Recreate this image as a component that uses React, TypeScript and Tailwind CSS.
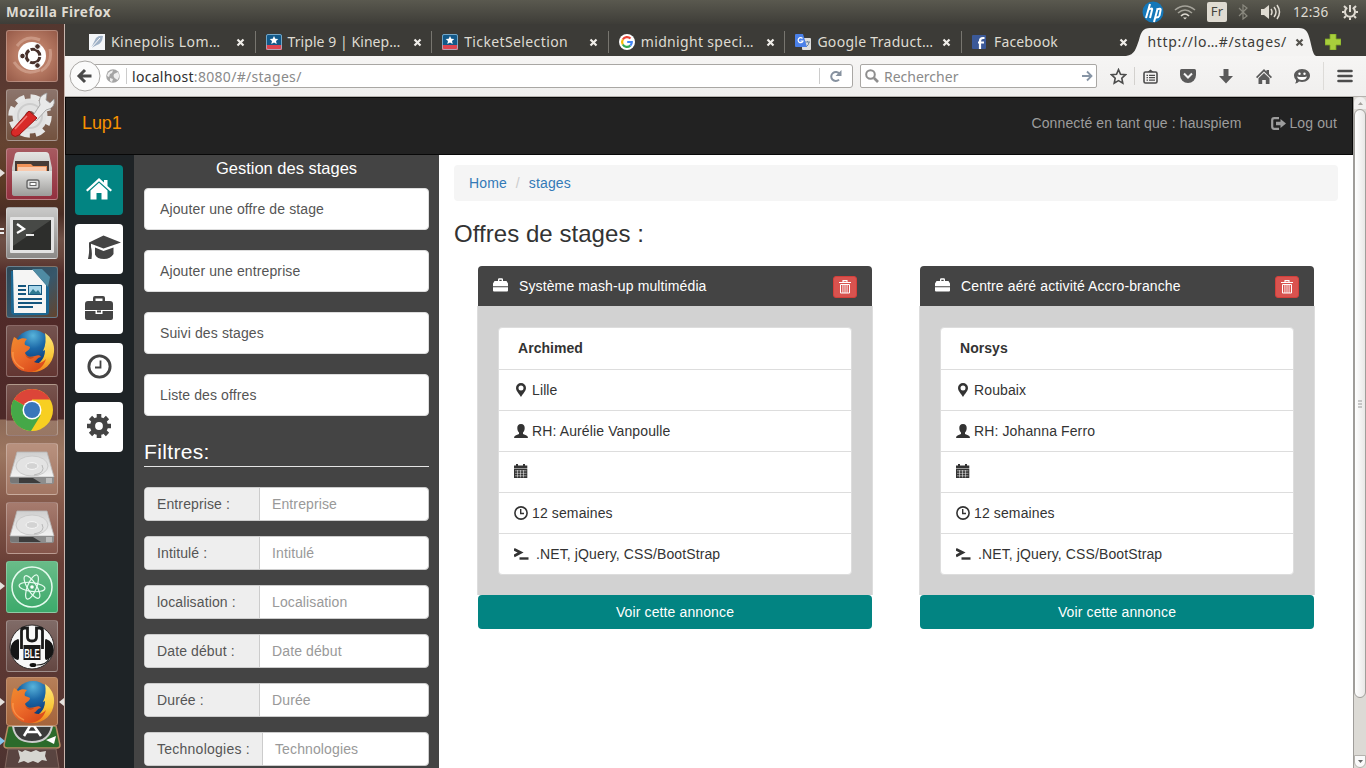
import React from "react";

type Kids = { children?: React.ReactNode };

const ui = "font-['Noto_Sans',sans-serif]";

function Svg({ w, h, vb, className = "", children }: { w: number; h: number; vb?: string; className?: string } & Kids) {
  return (
    <svg width={w} height={h} viewBox={vb ?? `0 0 ${w} ${h}`} className={`block shrink-0 ${className}`}>
      {children}
    </svg>
  );
}

/* ---------- launcher ---------- */

function Defs() {
  return (
    <svg width="0" height="0" className="absolute">
      <defs>
        <radialGradient id="globe" cx="0.5" cy="0.15" r="0.85">
          <stop offset="0" stopColor="#58b3da" />
          <stop offset="0.4" stopColor="#1c69a8" />
          <stop offset="1" stopColor="#0b2c66" />
        </radialGradient>
        <linearGradient id="fox" x1="0" y1="0" x2="0.7" y2="1">
          <stop offset="0" stopColor="#f08a2d" />
          <stop offset="0.55" stopColor="#ec6a2a" />
          <stop offset="1" stopColor="#d94a1a" />
        </linearGradient>
        <linearGradient id="tail" x1="0" y1="0" x2="0" y2="1">
          <stop offset="0" stopColor="#ffe97a" />
          <stop offset="0.6" stopColor="#f9c739" />
          <stop offset="1" stopColor="#ee7c1d" />
        </linearGradient>
        <linearGradient id="metal" x1="0" y1="0" x2="0" y2="1">
          <stop offset="0" stopColor="#e4e4e2" />
          <stop offset="1" stopColor="#9c9b99" />
        </linearGradient>
        <linearGradient id="disk" x1="0" y1="0" x2="0" y2="1">
          <stop offset="0" stopColor="#cfcfcf" />
          <stop offset="1" stopColor="#f3f3f3" />
        </linearGradient>
      </defs>
    </svg>
  );
}

function Tile({ bg, children }: { bg: string } & Kids) {
  return (
    <div className={`flex h-[52px] w-[52px] shrink-0 items-center justify-center rounded-[3px] border border-white/25 ${bg}`}>
      {children}
    </div>
  );
}

const Firefox = () => (
  <Svg w={46} h={46}>
    <circle cx="24" cy="21" r="19" fill="url(#globe)" />
    <path d="M36 5c6 4 10 11 9 19-1 12-10 20-21 20-8 0-14-4-17-9 6 4 17 5 23 0 5-4 6-9 6-13l-2 1c3-6 3-12 2-18z" fill="url(#tail)" />
    <path d="M5 9c2 1 3 2 4 3 3-2 6-2 9-1-2 2-3 4-2 6 2 1 4 1 5 2 0 3-4 4-5 6 2 5 7 4 10 3 3-1 5-1 6 1-3 0-4 3-7 5 5 2 8 1 12-3-2 7-8 13-17 13C9 44 2 35 2 25c0-6 1-11 3-16z" fill="url(#fox)" />
    <path d="M16 25c1 4 5 5 9 4-3 3-8 2-9-4z" fill="#8f2b12" opacity="0.5" />
    <path d="M4 24c-1 8 4 14 11 17" fill="none" stroke="#ffa051" strokeWidth="1.5" opacity="0.7" />
  </Svg>
);

const Drive = () => (
  <Svg w={48} h={38}>
    <path d="M9 2h30l7 25H2z" fill="url(#disk)" stroke="#b5b5b5" strokeWidth="0.8" />
    <ellipse cx="24" cy="16" rx="16" ry="10" fill="#e3e3e3" stroke="#cacaca" />
    <ellipse cx="24" cy="16" rx="6" ry="3.4" fill="#d3d3d3" stroke="#f6f6f6" />
    <path d="M34 15q4 8-8 10" fill="none" stroke="#b8b8b8" />
    <path d="M2 27h44v5q0 2-2 2H4q-2 0-2-2z" fill="#8d8d8d" />
    <path d="M2 28h9v5H4q-2 0-2-2z" fill="#777" />
    <path d="M11 28h14l8 5H11z" fill="#3c3c3c" />
    <path d="M38 28h6v5h-6z" fill="#b9b9b9" />
  </Svg>
);

function Launcher() {
  return (
    <div className="relative flex w-[65px] shrink-0 flex-col items-start gap-[7px] overflow-hidden border-r border-[#c9b6ae] bg-[linear-gradient(180deg,#54372f_0px,#5a3931_60px,#654331_120px,#5b3a25_160px,#4a2d24_190px,#6e5046_215px,#67463c_232px,#522b29_250px,#4d2928_395px,#8d6a57_396px,#9c7660_430px,#85594a_480px,#693f37_540px,#5c3833_640px,#4d3330_744px)] pt-[6px] pl-[6px]">
      <Tile bg="bg-[radial-gradient(circle,#cc9c86_0%,#b97c65_45%,#965a48_100%)]">
        <Svg w={46} h={46}>
          <path d="M8 13Q17 1 31 7M5 29Q15 44 31 37M41 16Q44 31 32 38" fill="none" stroke="#d8ae9b" strokeWidth="3" opacity="0.6" />
          <circle cx="23" cy="23" r="14" fill="#fff" />
          <circle cx="24" cy="23" r="6.8" fill="none" stroke="#47302a" strokeWidth="3.1" strokeDasharray="12.6 1.6" strokeDashoffset="-1" />
          <circle cx="13.5" cy="23" r="2.8" fill="#47302a" stroke="#fff" />
          <circle cx="28.5" cy="13.5" r="2.8" fill="#47302a" stroke="#fff" />
          <circle cx="28.5" cy="32.5" r="2.8" fill="#47302a" stroke="#fff" />
        </Svg>
      </Tile>
      <Tile bg="bg-[linear-gradient(180deg,#8c746c,#73523f)]">
        <Svg w={50} h={48}>
          <circle cx="23" cy="25" r="17.5" fill="#e2e2e2" />
          <circle cx="23" cy="25" r="19" fill="none" stroke="#e6e6e6" strokeWidth="5.5" strokeDasharray="9 5.92" />
          <circle cx="23" cy="25" r="12" fill="none" stroke="#cdcdcd" strokeWidth="2" />
          <circle cx="23" cy="25" r="5" fill="#7d635b" />
          <path d="M25 26l8-12q-3-9 7-12l-1 7 4 3 4-4q2 9-8 11L29 30z" fill="#e9e9e9" stroke="#999" strokeWidth="0.8" />
          <path d="M22 20l8 7L12 44q-4 3-7 0-2-3 1-6z" fill="#d92a28" stroke="#9c1514" />
          <path d="M20 25L8 38" stroke="#f07b76" strokeWidth="1.5" />
        </Svg>
      </Tile>
      <Tile bg="bg-[linear-gradient(180deg,#a75a60,#93303f)]">
        <Svg w={44} h={46}>
          <path d="M5 3q1-2 3-2h28q2 0 3 2l3 14v25q0 3-3 3H5q-3 0-3-3V17z" fill="url(#metal)" />
          <path d="M5 10h34v14H5z" fill="#463b36" />
          <path d="M7 13h14l2 2h14v10H7z" fill="#f0935a" />
          <path d="M8 17h28M8 19h28" stroke="#fff" />
          <path d="M2 20h40v22q0 3-3 3H5q-3 0-3-3z" fill="url(#metal)" />
          <rect x="17" y="29" width="12" height="8.500" rx="2" fill="#ddd" stroke="#666" strokeWidth="1.4" />
          <rect x="20" y="31.5" width="6" height="3" fill="#fff" stroke="#666" />
        </Svg>
      </Tile>
      <Tile bg="bg-[linear-gradient(180deg,#c9c9c8,#8b8987)]">
        <Svg w={46} h={42}>
          <rect x="1" y="5" width="44" height="36" rx="1" fill="#e3e3e3" />
          <path d="M4 8h38v30H4z" fill="#2d2e2c" />
          <path d="M4 8h38L4 34z" fill="#565855" opacity="0.65" />
          <path d="M8 12l7 5-7 4" fill="none" stroke="#fff" strokeWidth="2.2" />
          <path d="M17 23h8" stroke="#fff" strokeWidth="1.8" />
        </Svg>
      </Tile>
      <Tile bg="bg-[linear-gradient(135deg,#2f4654_0%,#37576b_55%,#63442e_100%)]">
        <Svg w={44} h={48} className="-ml-[4px]">
          <path d="M3 3h22l16 16v25q0 3-3 3H7q-4 0-4-4z" fill="#1c6792" />
          <path d="M5 2h20l13 15v28H6z" fill="#f5f5f4" />
          <path d="M24 1h10l8 8-2 10z" fill="#4f8ba3" />
          <path d="M10 18h8M10 22h8M10 26h8M10 31h24M10 35h24M10 39h15" stroke="#14567e" strokeWidth="2" />
          <rect x="20.500" y="17.500" width="13" height="9" fill="#a9d7ea" stroke="#14567e" />
          <path d="M21 26l4-5 3 3 2-2 3 4z" fill="#2d7890" />
        </Svg>
      </Tile>
      <Tile bg="bg-[linear-gradient(180deg,#74534f,#633632)]"><Firefox /></Tile>
      <Tile bg="bg-[linear-gradient(180deg,#77544e_0px,#673c38_35px,#9a7968_36px,#987763_52px)]">
        <Svg w={44} h={44}>
          <circle cx="22" cy="22" r="21" fill="#f7cf22" />
          <path d="M22 22L3.8 11.5A21 21 0 0 1 40.2 11.5H22z" fill="#dc4538" />
          <path d="M22 22L12.9 16.8 3.8 11.5A21 21 0 0 0 21 43l9.5-15.5z" fill="#45a848" />
          <circle cx="22" cy="22" r="9.500" fill="#fff" />
          <circle cx="22" cy="22" r="8" fill="#3a76ba" />
        </Svg>
      </Tile>
      <Tile bg="bg-[linear-gradient(180deg,#b8917e,#a27663)]"><Drive /></Tile>
      <Tile bg="bg-[linear-gradient(180deg,#a67b6e,#85564b)]"><Drive /></Tile>
      <Tile bg="bg-[linear-gradient(180deg,#69bb88,#3caa6b)]">
        <Svg w={44} h={44}>
          <g fill="none" stroke="#e4fbee" strokeWidth="1.2">
            <circle cx="22" cy="22" r="20" strokeWidth="1.500" />
            <ellipse cx="22" cy="22" rx="4.500" ry="13" transform="rotate(22 22 22)" />
            <ellipse cx="22" cy="22" rx="4.500" ry="13" transform="rotate(97 22 22)" />
            <ellipse cx="22" cy="22" rx="4.500" ry="13" transform="rotate(148 22 22)" />
          </g>
          <circle cx="22" cy="22" r="1.800" fill="#fff" />
        </Svg>
      </Tile>
      <Tile bg="bg-[linear-gradient(180deg,#806b67,#644742)]">
        <Svg w={48} h={48}>
          <circle cx="24" cy="25" r="22" fill="#f8f8f8" stroke="#2f2a29" strokeWidth="1" />
          <path d="M13.500 27V9q0-3 3-3h3v9q0 4 4.500 4t4.500-4V6h3q3 0 3 3v18" fill="none" stroke="#1a1a1a" strokeWidth="2.800" />
          <path d="M10 17Q2 20 2.500 28t7 10q1.500 0 1.500-2V19q0-2-1-2zM38 17q8 3 7.500 11t-7 10q-1.500 0-1.500-2V19q0-2 1-2z" fill="#151515" />
          <path d="M41 37q-3 6-12 6" fill="none" stroke="#222" strokeWidth="1.200" />
          <ellipse cx="25" cy="43" rx="3.500" ry="2" fill="#111" />
          <rect x="15.500" y="23" width="17" height="15" fill="#1a1a1a" />
          <text x="24" y="35.500" textAnchor="middle" fontFamily="Liberation Sans" fontWeight="700" fontSize="13" textLength="15.500" lengthAdjust="spacingAndGlyphs" fill="#fff">BLE</text>
        </Svg>
      </Tile>
      <div className="-mt-[2px] flex h-[91px] w-[52px] shrink-0 flex-col">
        <div className="z-10 flex h-[50px] items-center justify-center rounded-[3px] border border-[#c08f6d] bg-[linear-gradient(180deg,#b77f58,#a5643c)]"><Firefox /></div>
        <Svg w={58} h={42} className="-ml-[3px]">
          <path d="M5 0h48l4 19q0 3-3 3H4q-3 0-3-3z" fill="#2b6b2b" stroke="#b78c63" strokeWidth="1.5" />
          <path d="M10 0q2 16 19 16T49 0z" fill="#3b3b3b" stroke="#ccc" strokeWidth="2" />
          <path d="M21 10l6-10h4l7 10M23 6h12" fill="none" stroke="#fff" strokeWidth="2.500" />
          <path d="M43 14l10-4-2 8z" fill="#fff" />
          <path d="M5 23h48l3 19H2z" fill="#594440" stroke="#80665e" />
          <path d="M15 24l4 2 3-2 6 2 5-2 4 2 6-1-1 5 2 5-5-1-4 3-5-2-5 2-4-2-6 2 2-5z" fill="#d6d5d0" />
        </Svg>
      </div>
      <div className="absolute top-[145px] left-0"><Svg w={5} h={8}><path d="M0 0l5 4-5 4z" fill="#e5e1dd" /></Svg></div>
      <div className="absolute top-[204px] left-0"><Svg w={4} h={8}><path d="M0 1h4M0 5h4" stroke="#eee" strokeWidth="2" /></Svg></div>
      <div className="absolute top-[558px] left-0"><Svg w={5} h={8}><path d="M0 0l5 4-5 4z" fill="#e5e1dd" /></Svg></div>
      <div className="absolute top-[674px] left-0"><Svg w={5} h={8}><path d="M0 0l5 4-5 4z" fill="#e5e1dd" /></Svg></div>
      <div className="absolute top-[713px] left-0"><Svg w={5} h={8}><path d="M0 0l5 4-5 4z" fill="#87c5ed" /></Svg></div>
      <div className="absolute top-[674px] right-0"><Svg w={5} h={8}><path d="M5 0L0 4l5 4z" fill="#e5e1dd" /></Svg></div>
    </div>
  );
}

/* ---------- desktop panel ---------- */

function TopPanel() {
  return (
    <div className={`flex h-6 shrink-0 items-center bg-[linear-gradient(180deg,#5a594f,#3e3d38)] pl-[6px] text-[13.5px] text-[#dfdbd2] ${ui}`}>
      <span className="font-bold tracking-[0.480px]">Mozilla Firefox</span>
      <Svg w={22} h={22} className="ml-auto">
        <circle cx="11" cy="11" r="10.500" fill="#1477b9" />
        <path d="M8 3L4 17M6 9q5-3 4 0l-2 8M15.500 8l-3.500 13M14.500 8.500q5-2 4 1l-1 5q-1 2.500-4 2" fill="none" stroke="#fff" strokeWidth="2" />
      </Svg>
      <Svg w={22} h={16} className="ml-[10px]">
        <g fill="none" stroke="#a5a39a" strokeWidth="1.6">
          <path d="M1 6Q11-2 21 6" /><path d="M4 9q7-6 14 0" /><path d="M7 12q4-4 8 0" stroke="#dfdbd2" />
        </g>
        <path d="M9 13.500h4l-2 2z" fill="#dfdbd2" />
      </Svg>
      <span className="ml-[11px] flex h-5 w-5 items-center justify-center rounded-[2px] bg-[#dfdbd2] text-[13px] tracking-[0.300px] text-[#44433e]">Fr</span>
      <Svg w={10} h={16} className="ml-[11px]"><path d="M1 4l8 8-4 3V1l4 3-8 8" fill="none" stroke="#8a897f" strokeWidth="1.2" /></Svg>
      <Svg w={22} h={16} className="ml-[12px]">
        <path d="M1 5h3l5-4v14l-5-4H1z" fill="#dfdbd2" />
        <path d="M11 5q2 3 0 6M14 3q4 5 0 10M17 1q5 7 0 14" fill="none" stroke="#dfdbd2" strokeWidth="1.5" />
      </Svg>
      <span className="ml-[11px] w-[38px] tracking-[0.150px]">12:36</span>
      <Svg w={16} h={18} className="mr-[8px] ml-[11px]">
        <g fill="none" stroke="#dfdbd2">
          <path d="M5.200 4.700A5 5 0 1 0 10.800 4.700" strokeWidth="2" />
          <path d="M8 2v7" strokeWidth="2" />
          <path d="M0 9h2.500M13.500 9H16M2 15l2-2M14 15l-2-2M2 3l2 2M14 3l-2 2M8 14.500V17" strokeWidth="2" />
        </g>
      </Svg>
    </div>
  );
}

/* ---------- browser chrome ---------- */

const Close = ({ dark = false }: { dark?: boolean }) => (
  <Svg w={9} h={9}><path d="M1.500 1.500l6 6M7.500 1.500l-6 6" stroke={dark ? "#55534e" : "#f0eee9"} strokeWidth="2.2" /></Svg>
);

const Kine = () => (
  <Svg w={16} h={16}>
    <rect width="16" height="16" rx="1.500" fill="#12598a" />
    <rect y="11" width="16" height="5" fill="#dd4450" />
    <path d="M8 2l1.300 2.800 3 .3-2.300 2 .7 3L8 8.600l-2.700 1.500.7-3-2.300-2 3-.3z" fill="#fff" />
    <rect x="0.500" y="0.500" width="15" height="15" rx="1.500" fill="none" stroke="#9fc7de" opacity="0.7" />
  </Svg>
);

const tabs: { icon: React.ReactNode; label: string; cls: string }[] = [
  { icon: <Svg w={16} h={16}><rect width="16" height="16" fill="#f4f6f8" /><path d="M2 14L7 4q3-3 7-2-1 8-6 9z" fill="#9fb1c6" /><path d="M2 14l9-10" stroke="#fff" /></Svg>, label: "Kinepolis Lom…", cls: "tracking-[0.430px]" },
  { icon: <Kine />, label: "Triple 9 | Kinep…", cls: "tracking-[0.060px]" },
  { icon: <Kine />, label: "TicketSelection", cls: "tracking-[0.380px]" },
  {
    icon: (
      <Svg w={16} h={16}>
        <circle cx="8" cy="8" r="8" fill="#fff" />
        <g fill="none" strokeWidth="2.200">
          <path d="M11.500 4.500A4.900 4.900 0 0 0 3.800 5.500" stroke="#ea4335" />
          <path d="M3.800 5.500a4.900 4.900 0 0 0 0 5" stroke="#fbbc05" />
          <path d="M3.800 10.500a4.900 4.900 0 0 0 7.500 1.100" stroke="#34a853" />
          <path d="M11.300 11.600Q12.900 10 12.800 8H8.200" stroke="#4285f4" />
        </g>
      </Svg>
    ), label: "midnight speci…", cls: "tracking-[0.330px]",
  },
  {
    icon: (
      <Svg w={16} h={16}>
        <rect x="7" y="4" width="9" height="12" rx="1" fill="#dcdcdc" /><path d="M10 8h5M12.500 7v1M11 13q3-2 3-5" stroke="#68839b" fill="none" />
        <path d="M1 0h7l4 13H1q-1 0-1-1V1q0-1 1-1z" fill="#4a80e8" />
        <path d="M7.500 4.500A2.500 2.500 0 1 0 8 7H5.500" fill="none" stroke="#fff" strokeWidth="1.200" />
      </Svg>
    ), label: "Google Traduct…", cls: "tracking-[0.300px]",
  },
  { icon: <Svg w={14} h={14}><rect width="14" height="14" rx="1" fill="#3b5998" /><path d="M8 14V6q0-3 3-3h1.500M6 7.500h6" fill="none" stroke="#fff" strokeWidth="2.200" /></Svg>, label: "Facebook", cls: "tracking-[0.150px]" },
];

function TabBar() {
  return (
    <div className={`flex h-8 shrink-0 bg-[#3c3b37] pl-[14px] text-[14px] text-[#dfdbd2] ${ui}`}>
      {tabs.map((t, i) => (
        <div key={i} className={`flex w-[176.600px] shrink-0 items-center pt-[4px] pl-[10px] ${i === 5 ? "mr-[-2px]" : ""}`}>
          <span className="w-[22px] shrink-0">{t.icon}</span>
          <span className={`w-[125px] shrink-0 pb-[2px] whitespace-nowrap ${t.cls}`}>{t.label}</span>
          <Close />
          {i < 5 && <span className="ml-auto h-[22px] w-px bg-[#77756f]" />}
        </div>
      ))}
      <div className="relative -ml-[4px] h-8 w-[190px] shrink-0">
        <Svg w={190} h={32} className="-ml-[7px]">
          <path d="M0 32C9 31 10 24 13 16 15 8 17 4 24 4H173c7 0 9 4 11 12 2 8 3 15 6 16z" fill="#f4f3f2" />
        </Svg>
        <div className="absolute inset-0 flex items-center pt-[4px] pl-[15px] text-[#3c3b37]">
          <span className="w-[147px] pb-[2px] tracking-[0.650px] whitespace-nowrap">http://lo…#/stages/</span>
          <Close dark />
        </div>
      </div>
      <Svg w={16} h={16} className="mt-[10px] ml-[2px]">
        <path d="M5 0h6v5h5v6h-5v5H5v-5H0V5h5z" fill="#a8cf3c" stroke="#7ba324" strokeWidth="0.800" />
      </Svg>
    </div>
  );
}

function NavBar() {
  return (
    <div className={`flex h-[41px] shrink-0 items-center border-b border-[#b5b2ae] bg-[linear-gradient(180deg,#f6f5f4,#f0efee)] pl-[4px] text-[14px] ${ui}`}>
      <Svg w={32} h={32} className="z-10">
        <circle cx="16" cy="16" r="15" fill="#fbfbfb" stroke="#a9a7a4" />
        <path d="M16 10L10 16l6 6M10.500 16h12" fill="none" stroke="#4a4a4a" strokeWidth="3" />
      </Svg>
      <div className="-ml-[8px] flex h-6 w-[760px] items-center rounded-[3px] border border-[#a9a7a4] bg-white pl-[12px]">
        <Svg w={14} h={14}>
          <circle cx="7" cy="7" r="6.800" fill="#a5a5a5" />
          <path d="M2 4q3-3 5-2.500L6 4l-2 1-1 3-2-1zM8 5l4-2 1.500 4-2 4-3-2-1-2zM4 9l3 1-1 3-2-1z" fill="#efefef" />
        </Svg>
        <span className="mr-[5px] ml-[6px] h-4 w-px bg-[#ccc]" />
        <span className="tracking-[0.300px] text-[#2e2e2e]">localhost<span className="text-[#8a8a8a]">:8080/#/stages/</span></span>
        <span className="ml-auto h-4 w-px bg-[#ccc]" />
        <Svg w={12} h={12} className="mx-[10px]">
          <path d="M9 9.600A4.500 4.500 0 1 1 9.500 4" fill="none" stroke="#86919f" strokeWidth="2" /><path d="M11.500 0v6h-6z" fill="#86919f" />
        </Svg>
      </div>
      <div className="ml-[7px] flex h-6 w-[237px] items-center rounded-[2px] border border-[#a9a7a4] bg-white pl-[4px]">
        <Svg w={14} h={14}><circle cx="5.500" cy="5.500" r="4.300" fill="none" stroke="#8e8e8e" strokeWidth="2" /><path d="M9 9l4 4" stroke="#8e8e8e" strokeWidth="2.600" /></Svg>
        <span className="ml-[5px] text-[#8a8a8a]">Rechercher</span>
        <Svg w={11} h={12} className="mr-[3px] ml-auto"><path d="M0 6h9M5 1.500L9.500 6 5 10.500" fill="none" stroke="#8795a5" strokeWidth="1.800" /></Svg>
      </div>
      <Svg w={17} h={17} className="ml-[13px]"><path d="M8.500 1.600l2 4.600 5 .5-3.700 3.500 1 5-4.300-2.600-4.300 2.600 1-5L1.500 6.700l5-.5z" fill="none" stroke="#4c4c4c" strokeWidth="1.600" /></Svg>
      <span className="ml-[7px] h-[18px] w-px bg-[#d3d1ce]" />
      <Svg w={15} h={15} className="ml-[8px]">
        <rect x="1" y="3" width="13" height="11" rx="1.500" fill="none" stroke="#4c4c4c" strokeWidth="1.600" />
        <path d="M4.500 3L7.500.5l3 2.500z" fill="#4c4c4c" /><path d="M3.500 6.300h1.500M6 6.300h6M3.500 8.700h1.500M6 8.700h6M3.500 11.200h1.500M6 11.200h6" stroke="#4c4c4c" strokeWidth="1.300" />
      </Svg>
      <Svg w={16} h={14} className="ml-[22px]"><path d="M1.500 0h13Q16 0 16 1.500V6a8 8 0 0 1-16 0V1.500Q0 0 1.500 0z" fill="#5a5a5a" /><path d="M4 4.500L8 8.500l4-4" fill="none" stroke="#f4f4f4" strokeWidth="2" /></Svg>
      <Svg w={14} h={15} className="ml-[23px]"><path d="M4.500 0h5v7H14L7 14.500 0 7h4.500z" fill="#5a5a5a" /></Svg>
      <Svg w={16} h={15} className="ml-[23px]"><path d="M8 0l2.500 2.500V1H13v4l3 3-1.200 1.200L8 2.600 1.200 9.200 0 8z" fill="#5a5a5a" /><path d="M8 4l5.500 5.300V15H9.800v-4H6.200v4H2.500V9.300z" fill="#5a5a5a" /></Svg>
      <Svg w={16} h={15} className="ml-[22px]">
        <path d="M8 0c5 0 8 3 8 6.500S13 13 8 13c-1 0-2 0-3-.4Q3.500 14.500 1 14.500q1.500-2 1-3.500Q0 9.500 0 6.500C0 3 3.500 0 8 0z" fill="#5a5a5a" />
        <circle cx="5.500" cy="4.800" r="1.200" fill="#fff" /><circle cx="10.500" cy="4.800" r="1.200" fill="#fff" /><path d="M3 7.500q5 1 10 0-1 3.500-5 3.500T3 7.500z" fill="#fff" />
      </Svg>
      <span className="ml-[13px] h-[28px] w-px bg-[#dddbd8]" />
      <Svg w={16} h={14} className="ml-[13px]"><path d="M1.500 2h13M1.500 7h13M1.500 12h13" stroke="#4c4c4c" strokeWidth="2.600" strokeLinecap="round" /></Svg>
    </div>
  );
}

/* ---------- page ---------- */

const nav: React.ReactNode[] = [
  <Svg w={26} h={22}>
    <path d="M13 0l5 4.600V2h3.500v6L26 12l-1.500 1.600L13 3.300 1.500 13.600 0 12z" fill="#fff" />
    <path d="M13 4.800l8.500 7.800V21.500H15.500V15h-5v6.500H4.500v-8.900z" fill="#fff" />
  </Svg>,
  <Svg w={36} h={28} className="ml-[9px]">
    <path d="M17.500 1.500L35 8.500l-17.500 6L5 9.800V13q1.500 5 .5 12H2Q3.500 18 3 13V8.500z" fill="#444" />
    <path d="M9 13.500l8.500 3.500 10-3.500V20q-3 5-9.500 5-7 0-9-4.500z" fill="#444" />
  </Svg>,
  <Svg w={28} h={24}>
    <path d="M8 5V2q0-2 2-2h8q2 0 2 2v3h5q3 0 3 3v6H0V8q0-3 3-3zM10.500 5h7V2.500h-7z" fill="#444" fillRule="evenodd" />
    <path d="M0 15h10.500v3h7v-3H28v7q0 2-2 2H2q-2 0-2-2z" fill="#444" />
    <path d="M12 14.500h4v2h-4z" fill="#444" />
  </Svg>,
  <Svg w={25} h={25}><circle cx="12.500" cy="12.500" r="10.600" fill="none" stroke="#444" strokeWidth="2.900" /><path d="M13.500 6.500v7H8" fill="none" stroke="#444" strokeWidth="1.800" /></Svg>,
  <Svg w={24} h={24}>
    <circle cx="12" cy="12" r="6.500" fill="none" stroke="#444" strokeWidth="5.200" />
    <g stroke="#444" strokeWidth="4.600"><path d="M12 0v4M12 20v4M0 12h4M20 12h4M3.500 3.500l3 3M17.500 17.500l3 3M20.500 3.500l-3 3M6.500 17.500l-3 3" /></g>
  </Svg>,
];

const filters: [string, string][] = [
  ["Entreprise :", "Entreprise"], ["Intitulé :", "Intitulé"], ["localisation :", "Localisation"],
  ["Date début :", "Date début"], ["Durée :", "Durée"], ["Technologies :", "Technologies"],
];

const Case = () => (
  <Svg w={15} h={14}><path d="M5 3V1.500Q5 .3 6.200 .3h2.600Q10 .3 10 1.500V3h3.500L15 5.500v2.800H0V5.500L1.500 3zM6.300 3h2.400V1.700H6.300z" fill="#fff" fillRule="evenodd" /><path d="M0 9.300h15v3.200q0 1-1 1H1q-1 0-1-1z" fill="#fff" /></Svg>
);

const Trash = () => (
  <Svg w={12} h={14}>
    <path d="M0 2.500h12M4 2V.6h4V2" fill="none" stroke="#fff" strokeWidth="1.100" />
    <path d="M1.500 4.500h9V13h-9z" fill="none" stroke="#fff" strokeWidth="1" /><path d="M3.900 4.500V13M6 4.500V13M8.100 4.500V13" stroke="#fff" strokeWidth="0.900" />
  </Svg>
);

const rowIcons: React.ReactNode[] = [
  <Svg w={14} h={14}><path d="M7 0a5 5 0 0 1 5 5c0 3-3 5.500-5 9-2-3.500-5-6-5-9a5 5 0 0 1 5-5zm0 2.500a2.500 2.500 0 1 0 0 5 2.500 2.500 0 0 0 0-5z" fill="#333" fillRule="evenodd" /></Svg>,
  <Svg w={14} h={14}><path d="M7 0c2.700 0 3.800 1.800 3.700 4 0 2-.8 3.500-1.700 4.500V10l3 1.200q2 .8 2 2.800H0q0-2 2-2.800L5 10V8.500C4.100 7.500 3.300 6 3.300 4 3.200 1.800 4.300 0 7 0z" fill="#333" /></Svg>,
  <Svg w={14} h={14} className="-mt-[2px]">
    <path d="M0 1.500h2V0h2v1.500h5V0h2v1.500h2.300V4H0zM0 4.500h13.300V14H0z" fill="#333" />
    <path d="M1 6.800h11.500M1 9.300h11.500M1 11.800h11.500M3.500 6v7.500M6.500 6v7.500M9.500 6v7.500" stroke="#fff" strokeWidth="0.500" />
  </Svg>,
  <Svg w={14} h={14} className="-mt-[1px]"><circle cx="7" cy="7" r="6.100" fill="none" stroke="#333" strokeWidth="1.600" /><path d="M6.700 3v4.500H10" fill="none" stroke="#333" strokeWidth="1.400" /></Svg>,
  <Svg w={15} h={14}><path d="M0 2.300l6.500 3.200L0 9" fill="none" stroke="#333" strokeWidth="2.800" /><path d="M5.500 11.500h9" stroke="#333" strokeWidth="2.400" /></Svg>,
];

function OfferCard({ title, rows }: { title: string; rows: string[] }) {
  return (
    <div className="w-[396px] shrink-0">
      <div className="mx-px flex h-10 items-center rounded-t-[4px] bg-[#444] px-[15px] text-white">
        <div className="-mt-[2px]"><Case /></div>
        <span className="ml-[11px]">{title}</span>
        <span className="mt-[2px] ml-auto flex h-[22px] w-6 items-center justify-center rounded-[3px] border border-[#d43f3a] bg-[#d9534f] pb-px"><Trash /></span>
      </div>
      <div className="flex h-[289px] flex-col border-x border-[#ddd] bg-[#d2d2d2] px-[20px] pt-[21px]">
        <div className="flex h-[248px] flex-col rounded-[4px] border border-[#ddd] bg-white">
          {rows.map((r, i) => (
            <div key={i} className={`flex h-[41px] shrink-0 items-center pl-[15px] ${i ? "border-t border-[#ddd]" : "pb-[2px]"}`}>
              {i > 0 && rowIcons[i - 1]}
              <span className={i === 0 ? "ml-[4px] font-bold tracking-[0.050px]" : i === 5 ? "ml-[7px]" : "ml-[4px]"}>{r}</span>
            </div>
          ))}
        </div>
      </div>
      <div className="mx-px flex h-[34px] items-center justify-center rounded-[4px] bg-[#028482] text-white">Voir cette annonce</div>
    </div>
  );
}

function Page() {
  return (
    <div className="flex min-w-0 flex-1 flex-col bg-white font-['Liberation_Sans',sans-serif] text-[14px] leading-5 tracking-[0.120px] text-[#333]">
      <div className="flex h-[58px] shrink-0 items-center border border-[#080808] bg-[#222] pr-[15px] pb-[6px] pl-4 text-[#9d9d9d]">
        <span className="pb-px text-[18px] tracking-[-0.100px] text-[#f79100]">Lup1</span>
        <span className="ml-auto">Connecté en tant que : hauspiem</span>
        <Svg w={15} h={13} className="mr-[3px] ml-[30px]">
          <path d="M8 1.200H3.200Q1.200 1.200 1.200 3.200v6.600q0 2 2 2H8" fill="none" stroke="#9d9d9d" strokeWidth="2.200" />
          <path d="M5 4.800h4.500V2L15 6.500 9.500 11V8.200H5z" fill="#9d9d9d" />
        </Svg>
        <span>Log out</span>
      </div>
      <div className="flex min-h-0 flex-1">
        <div className="flex w-[69px] shrink-0 flex-col gap-[9.250px] bg-[#1e2326] pt-[10px] pl-[10px]">
          {nav.map((n, i) => (
            <div key={i} className={`flex h-[50px] w-12 shrink-0 items-center justify-center rounded-[4px] pb-[2px] ${i === 0 ? "bg-[#028482]" : "bg-white"}`}>{n}</div>
          ))}
        </div>
        <div className="flex w-[305px] shrink-0 flex-col overflow-hidden bg-[#444] px-[10px] text-[#555]">
          <div className="h-[33px] shrink-0 pt-[3px] text-center text-[16.500px] tracking-normal text-white">Gestion des stages</div>
          <div className="flex flex-col gap-5">
            {["Ajouter une offre de stage", "Ajouter une entreprise", "Suivi des stages", "Liste des offres"].map((b) => (
              <div key={b} className="flex h-[42px] items-center rounded-[4px] border border-[#ddd] bg-white pl-[15px]">{b}</div>
            ))}
          </div>
          <div className="mt-[20px] flex h-[31px] shrink-0 items-end border-b border-[#e5e5e5] pb-[4px] text-[21px] tracking-[0.350px] text-white">Filtres:</div>
          <div className="mt-5 flex flex-col gap-[15px]">
            {filters.map(([a, b], i) => (
              <div key={a} className="flex h-[34px] shrink-0 overflow-hidden rounded-[4px] border border-[#ccc] bg-white">
                <span className={`flex items-center border-r border-[#ccc] bg-[#eee] pl-3 ${i === 5 ? "w-[118px] tracking-[0.250px]" : "w-[115px]"}`}>{a}</span>
                <span className="flex items-center pl-3 text-[#999]">{b}</span>
              </div>
            ))}
          </div>
        </div>
        <div className="flex min-w-0 flex-1 flex-col pt-[10px] pr-[15px] pl-[15px]">
          <div className="flex h-9 items-center rounded-[4px] bg-[#f5f5f5] pl-[15px] text-[#337ab7]">
            <span>Home</span><span className="mx-[9px] text-[#ccc]">/</span><span>stages</span>
          </div>
          <h3 className="mt-[20px] h-[45px] text-[24px] leading-[26px] tracking-[0.050px]">Offres de stages :</h3>
          <div className="flex gap-[46px] pl-[23px]">
            <OfferCard title="Système mash-up multimédia" rows={["Archimed", "Lille", "RH: Aurélie Vanpoulle", "", "12 semaines", ".NET, jQuery, CSS/BootStrap"]} />
            <OfferCard title="Centre aéré activité Accro-branche" rows={["Norsys", "Roubaix", "RH: Johanna Ferro", "", "12 semaines", ".NET, jQuery, CSS/BootStrap"]} />
          </div>
        </div>
      </div>
    </div>
  );
}

function Scrollbar() {
  return (
    <div className="flex w-[13px] shrink-0 flex-col items-center border-l border-[#9f9d9a] bg-[#dcdad5]">
      <div className="flex h-[12px] w-full items-center justify-center rounded-t-[6px] bg-[#f1f0ef]"><Svg w={5} h={3}><path d="M0 3l2.500-3L5 3z" fill="#a5a29d" /></Svg></div>
      <div className="flex h-[589px] w-full items-center justify-center rounded-[6px] border border-[#a09e9a] bg-[linear-gradient(90deg,#fff,#e9e8e7)]">
        <Svg w={4} h={8}><path d="M0 1h4M0 4h4M0 7h4" stroke="#999" /></Svg>
      </div>
      <div className="flex-1" />
      <div className="flex h-[13px] w-full items-center justify-center rounded-b-[6px] border border-[#b5b2ad] bg-[#fafafa]"><Svg w={5} h={3}><path d="M0 0l2.500 3L5 0z" fill="#666" /></Svg></div>
    </div>
  );
}

export default function App() {
  return (
    <div className="flex h-[768px] w-[1366px] flex-col overflow-hidden">
      <Defs />
      <TopPanel />
      <div className="flex min-h-0 flex-1">
        <Launcher />
        <div className="flex min-w-0 flex-1 flex-col">
          <TabBar />
          <NavBar />
          <div className="flex min-h-0 flex-1">
            <Page />
            <Scrollbar />
          </div>
        </div>
      </div>
    </div>
  );
}
